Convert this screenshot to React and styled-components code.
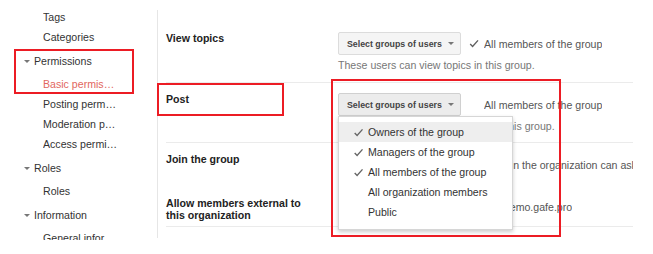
import React from "react";
import styled, { createGlobalStyle } from "styled-components";

const GlobalStyle = createGlobalStyle`
  body {
    margin: 0;
    background: #fff;
    font-family: "Liberation Sans", Arial, sans-serif;
  }
`;

const Page = styled.div`
  position: relative;
  display: flex;
  height: 240px;
  overflow: hidden;
  font-size: 10.6px;
  color: #333;
`;

/* ---------- sidebar ---------- */

const Sidebar = styled.nav`
  width: 157px;
  flex-shrink: 0;
  padding-top: 7px;
  box-sizing: border-box;
`;

const NavGroup = styled.div`
  margin-top: 4px;
`;

const NavHeader = styled.div`
  display: flex;
  align-items: center;
  height: 20px;
  margin-bottom: 3px;
  padding-left: 24px;
  color: #333;
`;

const Caret = styled.span`
  width: 0;
  height: 0;
  margin-right: 4px;
  border-left: 3px solid transparent;
  border-right: 3px solid transparent;
  border-top: 3px solid #777;
`;

const NavItem = styled.div`
  width: 75px;
  height: 20px;
  margin-left: 43px;
  line-height: 20px;
  white-space: nowrap;
  overflow: hidden;
  text-overflow: ellipsis;
  color: ${(p) => (p.$active ? "#e2665e" : "#333")};
`;

/* ---------- settings panel ---------- */

const Panel = styled.main`
  flex: 1;
  height: 228px;
  margin-top: 10px;
  padding: 12px 0 0 8px;
  box-sizing: border-box;
  border-left: 1px solid #e6e6e6;
`;

const Row = styled.section`
  display: flex;
  width: 467px;
  padding: ${(p) => p.$pad || "10px 0"};
  border-bottom: ${(p) => (p.$divider ? "1px solid #ebebeb" : "none")};
`;

const Label = styled.div`
  width: 172px;
  flex-shrink: 0;

  span {
    display: block;
    max-width: 145px;
    font-weight: bold;
    line-height: 12px;
    color: #222;
  }
`;

const Field = styled.div`
  flex: 1;
  min-width: 0;
  padding-top: ${(p) => p.$offset || "0"};
`;

const Controls = styled.div`
  display: flex;
  align-items: center;
`;

const SelectWrap = styled.div`
  position: relative;
  flex-shrink: 0;
`;

const SelectButton = styled.div`
  display: flex;
  align-items: center;
  justify-content: space-between;
  width: 123px;
  height: 23px;
  padding: 0 6px 0 8px;
  box-sizing: border-box;
  border: 1px solid ${(p) => (p.$open ? "#d0d0d0" : "#dcdcdc")};
  border-radius: 2px;
  background: ${(p) => (p.$open ? "#ececec" : "#f5f5f5")};
  font-size: 8.8px;
  font-weight: bold;
  color: #444;
`;

const Arrow = styled.span`
  width: 0;
  height: 0;
  border-left: 3px solid transparent;
  border-right: 3px solid transparent;
  border-top: 3px solid #777;
`;

const Tick = styled.svg`
  flex-shrink: 0;
  margin-left: ${(p) => p.$gap || "0"};
  visibility: ${(p) => (p.$hidden ? "hidden" : "visible")};
`;

const Value = styled.span`
  min-width: 0;
  margin-left: ${(p) => p.$gap || "5px"};
  overflow: hidden;
  white-space: nowrap;
  line-height: 14px;
  color: #555;
`;

const Help = styled.div`
  margin-top: 3px;
  line-height: 14px;
  color: #777;
  white-space: nowrap;
`;

/* ---------- dropdown menu ---------- */

const Menu = styled.ul`
  position: absolute;
  top: 100%;
  left: 0;
  z-index: 2;
  width: 175px;
  margin: 0;
  padding: 5px 0 7px;
  box-sizing: border-box;
  list-style: none;
  background: #fff;
  border: 1px solid #d6d6d6;
  box-shadow: 0 2px 4px rgba(0, 0, 0, 0.2);
`;

const MenuItem = styled.li`
  display: flex;
  align-items: center;
  height: 20px;
  padding-left: 10px;
  background: ${(p) => (p.$hover ? "#eeeeee" : "transparent")};
  color: #333;
  white-space: nowrap;

  svg {
    width: 19px;
    flex-shrink: 0;
  }
`;

/* ---------- red annotation frames ---------- */

const Callout = styled.div`
  position: absolute;
  z-index: 3;
  left: ${(p) => p.$x}px;
  top: ${(p) => p.$y}px;
  width: ${(p) => p.$w}px;
  height: ${(p) => p.$h}px;
  box-sizing: border-box;
  border: 2px solid #ec1c24;
  pointer-events: none;
`;

const Check = ({ hidden, gap }) => (
  <Tick width="10" height="9" viewBox="0 0 10 9" $hidden={hidden} $gap={gap}>
    <path d="M1.2 5 L3.6 7.4 L9 1.4" fill="none" stroke="#5f5f5f" strokeWidth="1.4" />
  </Tick>
);

const Select = ({ open, children }) => (
  <SelectWrap>
    <SelectButton $open={open}>
      Select groups of users
      <Arrow />
    </SelectButton>
    {children}
  </SelectWrap>
);

const menuItems = [
  { text: "Owners of the group", checked: true, hover: true },
  { text: "Managers of the group", checked: true },
  { text: "All members of the group", checked: true },
  { text: "All organization members" },
  { text: "Public" },
];

const App = () => {
  return (
    <>
      <GlobalStyle />
      <Page>
        <Sidebar>
          <NavItem>Tags</NavItem>
          <NavItem>Categories</NavItem>
          <NavGroup>
            <NavHeader>
              <Caret />
              Permissions
            </NavHeader>
            <NavItem $active>Basic permissions</NavItem>
            <NavItem>Posting permissions</NavItem>
            <NavItem>Moderation permissions</NavItem>
            <NavItem>Access permissions</NavItem>
          </NavGroup>
          <NavGroup>
            <NavHeader>
              <Caret />
              Roles
            </NavHeader>
            <NavItem>Roles</NavItem>
          </NavGroup>
          <NavGroup>
            <NavHeader>
              <Caret />
              Information
            </NavHeader>
            <NavItem>General information</NavItem>
          </NavGroup>
        </Sidebar>

        <Panel>
          <Row $divider>
            <Label><span>View topics</span></Label>
            <Field>
              <Controls>
                <Select />
                <Check gap="8px" />
                <Value>All members of the group</Value>
              </Controls>
              <Help>These users can view topics in this group.</Help>
            </Field>
          </Row>

          <Row $divider $pad="10px 0 9px">
            <Label><span>Post</span></Label>
            <Field>
              <Controls>
                <Select open>
                  <Menu>
                    {menuItems.map((item) => (
                      <MenuItem key={item.text} $hover={item.hover}>
                        <svg height="9" viewBox="0 0 10 9">
                          {item.checked && (
                            <path d="M1.2 5 L3.6 7.4 L9 1.4" fill="none" stroke="#666" strokeWidth="1.4" />
                          )}
                        </svg>
                        {item.text}
                      </MenuItem>
                    ))}
                  </Menu>
                </Select>
                <Check gap="8px" hidden />
                <Value>All members of the group</Value>
              </Controls>
              <Help>These users can post messages to this group.</Help>
            </Field>
          </Row>

          <Row $pad="10px 0 11px">
            <Label><span>Join the group</span></Label>
            <Field>
              <Controls>
                <Select />
                <Value $gap="11px">Anyone in the organization can ask to join the group</Value>
              </Controls>
            </Field>
          </Row>

          <Row $divider $pad="10px 0 5px">
            <Label><span>Allow members external to this organization</span></Label>
            <Field $offset="3px">
              <Controls>
                <Value $gap="1px">Allow external members outside of demo.gafe.pro</Value>
              </Controls>
            </Field>
          </Row>
        </Panel>

        <Callout $x={14} $y={49} $w={120} $h={45} />
        <Callout $x={157} $y={83} $w={127} $h={33} />
        <Callout $x={331} $y={79} $w={230} $h={158} />
      </Page>
    </>
  );
};

export default App;
